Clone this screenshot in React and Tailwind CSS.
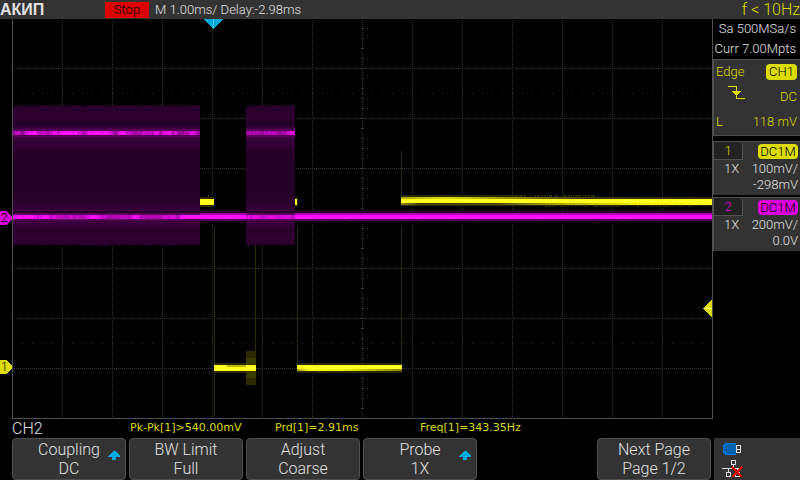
import React from "react";

const columns = [62, 112, 162, 212, 262, 312, 362, 412, 462, 512, 562, 612, 662];
const rows = [68, 118, 168, 268, 318, 368];

// small fixed generator, so that the trace looks the same on each render
const makeNoise = (seed) => {
  let s = seed;
  return () => {
    s = (s * 16807) % 2147483647;
    return s / 2147483647;
  };
};

const streaks = (from, to, seed, low, high) => {
  const rand = makeNoise(seed);
  const list = [];
  let level = (low + high) / 2;
  for (let x = from; x < to; x += 1) {
    level += (rand() - 0.5) * 0.4;
    level = Math.max(low, Math.min(high, level));
    list.push({ x, o: level });
  }
  return list;
};

const spikes = (from, to, seed, chance) => {
  const rand = makeNoise(seed);
  const list = [];
  for (let x = from; x < to; x += 1) {
    if (rand() < chance) list.push(x);
  }
  return list;
};

const Burst = ({ from, to, seed }) => {
  const w = to - from;
  return (
    <g>
      <rect x={from} y="105" width={w} height="140" fill="url(#burst)" />
      {spikes(from, to, seed + 5, 0.12).map((x) => (
        <rect key={x} x={x} y="105" width="1" height="2" fill="#000" />
      ))}
      {spikes(from, to, seed + 9, 0.12).map((x) => (
        <rect key={x} x={x} y="245" width="1" height="2" fill="#26002a" />
      ))}
      <rect x={from} y="129" width={w} height="8" fill="#560058" />
      {streaks(from, to, seed, 0.4, 1).map((p) => (
        <rect key={p.x} x={p.x} y="131" width="1" height="4" fill="#ff10ff" opacity={p.o} />
      ))}
    </g>
  );
};

const Graph = () => (
  <svg viewBox="0 19 713 400" className="block w-full h-auto" shapeRendering="crispEdges">
    <defs>
      <linearGradient id="burst" x1="0" y1="0" x2="0" y2="1">
        <stop offset="0" stopColor="#280029" />
        <stop offset="0.1" stopColor="#300032" />
        <stop offset="0.11" stopColor="#250027" />
        <stop offset="0.14" stopColor="#25002a" />
        <stop offset="0.17" stopColor="#3d003f" />
        <stop offset="0.24" stopColor="#3d003f" />
        <stop offset="0.27" stopColor="#2a002c" />
        <stop offset="0.28" stopColor="#370039" />
        <stop offset="0.31" stopColor="#2c002e" />
        <stop offset="0.36" stopColor="#250027" />
        <stop offset="0.64" stopColor="#250027" />
        <stop offset="0.71" stopColor="#2c002e" />
        <stop offset="0.77" stopColor="#3c003e" />
        <stop offset="0.85" stopColor="#3a003c" />
        <stop offset="0.88" stopColor="#28002a" />
        <stop offset="0.95" stopColor="#310033" />
        <stop offset="1" stopColor="#27002a" />
      </linearGradient>
      <linearGradient id="upper">
        <stop offset="0" stopColor="#b0aa00" />
        <stop offset="0.15" stopColor="#e0da00" />
        <stop offset="0.35" stopColor="#968f00" />
        <stop offset="0.6" stopColor="#3a3800" />
        <stop offset="1" stopColor="#2c2a00" />
      </linearGradient>
      <linearGradient id="lower">
        <stop offset="0" stopColor="#908a00" />
        <stop offset="0.06" stopColor="#403c00" />
        <stop offset="0.3" stopColor="#4c4800" />
        <stop offset="0.5" stopColor="#aaa400" />
        <stop offset="0.75" stopColor="#f0e800" />
        <stop offset="1" stopColor="#ffff20" />
      </linearGradient>
      <linearGradient id="tail">
        <stop offset="0" stopColor="#aaa400" />
        <stop offset="0.12" stopColor="#ffff20" />
        <stop offset="0.45" stopColor="#f4ec00" />
        <stop offset="1" stopColor="#8a8400" />
      </linearGradient>
    </defs>

    <rect x="0" y="19" width="713" height="400" fill="#000" />

    {/* grid */}
    <g stroke="#343434" strokeWidth="1">
      {columns.map((x) => (
        <line key={x} x1={x + 0.5} x2={x + 0.5} y1="20" y2="418" strokeDasharray="1 1" />
      ))}
      {rows.map((y) => (
        <line key={y} x1="14" x2="712" y1={y + 0.5} y2={y + 0.5} strokeDasharray="1 1" />
      ))}
      <line x1="22" x2="712" y1="93.5" y2="93.5" strokeDasharray="1 9" />
      <line x1="22" x2="712" y1="343.5" y2="343.5" strokeDasharray="1 9" />
      <line x1="362.5" x2="362.5" y1="28" y2="418" strokeWidth="3" strokeDasharray="1 9" />
      <line x1="22" x2="712" y1="218.5" y2="218.5" strokeWidth="3" strokeDasharray="1 9" />
    </g>

    {/* channel 2 */}
    <Burst from={13} to={200} seed={71} />
    <Burst from={246} to={295} seed={412} />
    <rect x="13" y="211" width="699" height="2" fill="#26002a" />
    <rect x="13" y="213" width="699" height="8" fill="#560058" />
    <rect x="200" y="213" width="46" height="2" fill="#a800ac" />
    <rect x="295" y="213" width="417" height="2" fill="#b400b8" />
    <rect x="13" y="215" width="699" height="4" fill="#ff10ff" />
    {streaks(13, 180, 33, 0, 0.7).map((p) => (
      <rect key={p.x} x={p.x} y="215" width="1" height="4" fill="#900094" opacity={p.o} />
    ))}
    {streaks(246, 295, 90, 0.2, 0.7).map((p) => (
      <rect key={p.x} x={p.x} y="215" width="1" height="4" fill="#900094" opacity={p.o} />
    ))}
    {spikes(200, 712, 77, 0.04).map((x) => (
      <rect key={x} x={x} y="221" width="1" height="2" fill="#3a003c" />
    ))}

    {/* channel 1 */}
    <g fill="#2b2900">
      <rect x="214" y="226" width="1" height="190" />
      <rect x="255" y="245" width="1" height="118" />
      <rect x="297" y="226" width="1" height="138" />
      <rect x="401" y="151" width="1" height="45" />
      <rect x="401" y="226" width="1" height="138" />
      <rect x="208" y="195" width="1" height="3" />
      <rect x="246" y="351" width="10" height="34" />
      <rect x="200" y="197" width="14" height="10" />
      <rect x="295" y="197" width="3" height="10" />
      <rect x="214" y="363" width="42" height="10" />
      <rect x="297" y="363" width="105" height="10" />
      <rect x="401" y="195" width="119" height="11" />
      <rect x="520" y="197" width="192" height="9" />
      {spikes(520, 600, 19, 0.5).map((x) => (
        <rect key={x} x={x} y="195" width="1" height="2" />
      ))}
      {spikes(545, 712, 55, 0.4).map((x) => (
        <rect key={x} x={x} y="206" width="1" height="1" />
      ))}
    </g>
    <rect x="246" y="358" width="10" height="20" fill="#3d3a00" />
    <rect x="401" y="197" width="311" height="2" fill="url(#upper)" />
    <rect x="401" y="203" width="311" height="2" fill="url(#lower)" />
    <g fill="#ffff20">
      <rect x="200" y="199" width="14" height="6" />
      <rect x="295" y="199" width="2" height="6" />
      <rect x="214" y="365" width="42" height="6" />
      <rect x="297" y="365" width="105" height="4" />
      <rect x="401" y="199" width="311" height="4" />
    </g>
    <rect x="227" y="365" width="19" height="2" fill="#c0b800" />
    <rect x="297" y="369" width="105" height="2" fill="url(#tail)" />

    {/* frame */}
    <rect x="12" y="19" width="1" height="400" fill="#505050" />
    <rect x="712" y="19" width="1" height="400" fill="#505050" />
    <rect x="12" y="418" width="701" height="1" fill="#505050" />

    {/* markers */}
    <path d="M204 19h19l-9 10h-1z" fill="#00a8e0" />
    <rect x="213" y="19" width="1" height="9" fill="#50d0ff" />
    <path d="M712 300v17l-9-8v-1z" fill="#dcdc00" />
    <rect x="704" y="308" width="8" height="1" fill="#ffff60" />
    <path d="M0 211h7l5 6v2l-5 6H0z" fill="#dc00dc" />
    <path d="M0 360h7l5 6v2l-5 6H0z" fill="#dcdc00" />
    <g className="font-['Roboto'] text-[12px]" fill="#000">
      <text x="1" y="222">2</text>
      <text x="1" y="371">1</text>
    </g>
  </svg>
);

const SoftKey = ({ title, value, arrow }) => (
  <button className="relative h-[42px] rounded-sm border border-[#505050] bg-[#333333] text-center text-base leading-[19px] text-[#e0e0e0]">
    <span className="block">{title}</span>
    <span className="block">{value}</span>
    {arrow ? (
      <svg className="absolute right-1 top-3 h-[9px] w-[13px]" viewBox="0 0 13 9" shapeRendering="crispEdges">
        <path d="M6 0h1l5 5v1H8v3H4V6H0V5z" fill="#00a8e0" />
      </svg>
    ) : null}
  </button>
);

const Channel = ({ number, color, badge, scale, offset }) => (
  <section className="h-[54px] border-l border-t border-[#505050] bg-[#333333] text-[13px] leading-4 text-[#e0e0e0]">
    <div className="flex h-[18px] justify-between">
      <div className={`w-[29px] rounded-tr-sm border-b border-r border-[#505050] bg-[#222222] text-center leading-[18px] ${color}`}>
        {number}
      </div>
      <div className={`mt-0.5 mr-0.5 h-[15px] w-10 rounded-sm text-center leading-[15px] text-black ${badge}`}>
        DC1M
      </div>
    </div>
    <div className="flex justify-between pt-px pl-2.5 pr-0.5">
      <span>1X</span>
      <span>{scale}</span>
    </div>
    <div className="pr-0.5 text-right">{offset}</div>
  </section>
);

const App = () => {
  return (
    <div className="min-h-screen bg-black font-['Roboto',sans-serif] font-light text-[#e0e0e0]">
      <header className="flex h-[19px] items-center bg-[#333333] text-[13px] leading-[18px] whitespace-nowrap">
        <div className="w-[105px] font-['Liberation_Sans',sans-serif] text-base leading-[18px] font-bold">АКИП</div>
        <div className="h-4 w-11 bg-[#dc0000] text-center leading-4 text-black">Stop</div>
        <div className="pl-1.5">M 1.00ms/ Delay:-2.98ms</div>
        <div className="ml-auto text-base leading-[18px] text-[#dcdc00]">f &lt; 10Hz</div>
      </header>

      <div className="flex">
        <main className="min-w-0 flex-1">
          <Graph />
          <div className="flex h-[19px] items-center pl-3">
            <div className="w-[118px] text-base">CH2</div>
            <div className="flex flex-1 font-['DejaVu_Sans',sans-serif] text-[11px] font-normal text-[#dcdc00]">
              <span className="w-[145px]">Pk-Pk[1]&gt;540.00mV</span>
              <span className="w-[145px]">Prd[1]=2.91ms</span>
              <span>Freq[1]=343.35Hz</span>
            </div>
          </div>
          <nav className="grid grid-cols-6 gap-[3px] pl-3 pr-0.5">
            <SoftKey title="Coupling" value="DC" arrow />
            <SoftKey title="BW Limit" value="Full" />
            <SoftKey title="Adjust" value="Coarse" />
            <SoftKey title="Probe" value="1X" arrow />
            <div />
            <SoftKey title="Next Page" value="Page 1/2" />
          </nav>
        </main>

        <aside className="flex w-[87px] flex-col whitespace-nowrap">
          <div className="h-10 pr-1 text-right text-[13px] leading-5">
            <div>Sa 500MSa/s</div>
            <div>Curr 7.00Mpts</div>
          </div>
          {/* trigger */}
          <section className="h-[77px] border-l border-t border-b border-[#505050] bg-[#333333] pl-0.5 pr-[3px] text-[13px] text-[#dcdc00]">
            <div className="flex h-6 items-center justify-between">
              <span>Edge</span>
              <span className="h-4 w-[31px] rounded-sm bg-[#dcdc00] text-center leading-4 text-black">CH1</span>
            </div>
            <div className="flex h-[25px] items-center justify-between">
              <svg className="ml-3 -mt-2 h-[14px] w-[18px]" viewBox="0 0 18 14" shapeRendering="crispEdges">
                <path d="M0 .5h8.5v12H17" fill="none" stroke="#dcdc00" />
                <path d="M4 5h9L9 10H8z" fill="#dcdc00" />
              </svg>
              <span>DC</span>
            </div>
            <div className="flex h-[25px] items-center justify-between">
              <span>L</span>
              <span>118 mV</span>
            </div>
          </section>
          <div className="mt-[5px] flex flex-col gap-0.5">
            <Channel number="1" color="text-[#dcdc00]" badge="bg-[#dcdc00]" scale="100mV/" offset="-298mV" />
            <Channel number="2" color="text-[#dc00dc]" badge="bg-[#dc00dc]" scale="200mV/" offset="0.0V" />
          </div>
          <div className="mt-auto ml-px h-[42px] bg-[#333333] pl-2 pt-1">
            <svg className="h-9 w-[22px]" viewBox="722 442 22 36" shapeRendering="crispEdges">
              <path d="M736 443.5h-10l-3 3v5l3 3h10" fill="#0064b0" stroke="#0078f0" />
              <path d="M736.5 445.500h4v7h-4zM736 449h5" fill="#333333" stroke="#e0e0e0" />
              <path
                d="M731.500 460.500h4v4h-4zM726.500 472.500h4v4h-4zM735.500 472.500h4v4h-4zM733.500 465v3M722 468.500h18M728.500 469v3M737.500 469v3"
                fill="none"
                stroke="#e0e0e0"
              />
              <path d="M732 467l10 10M742 467l-10 10" stroke="#dc0000" strokeWidth="1.5" />
            </svg>
          </div>
        </aside>
      </div>
    </div>
  );
};

export default App;
